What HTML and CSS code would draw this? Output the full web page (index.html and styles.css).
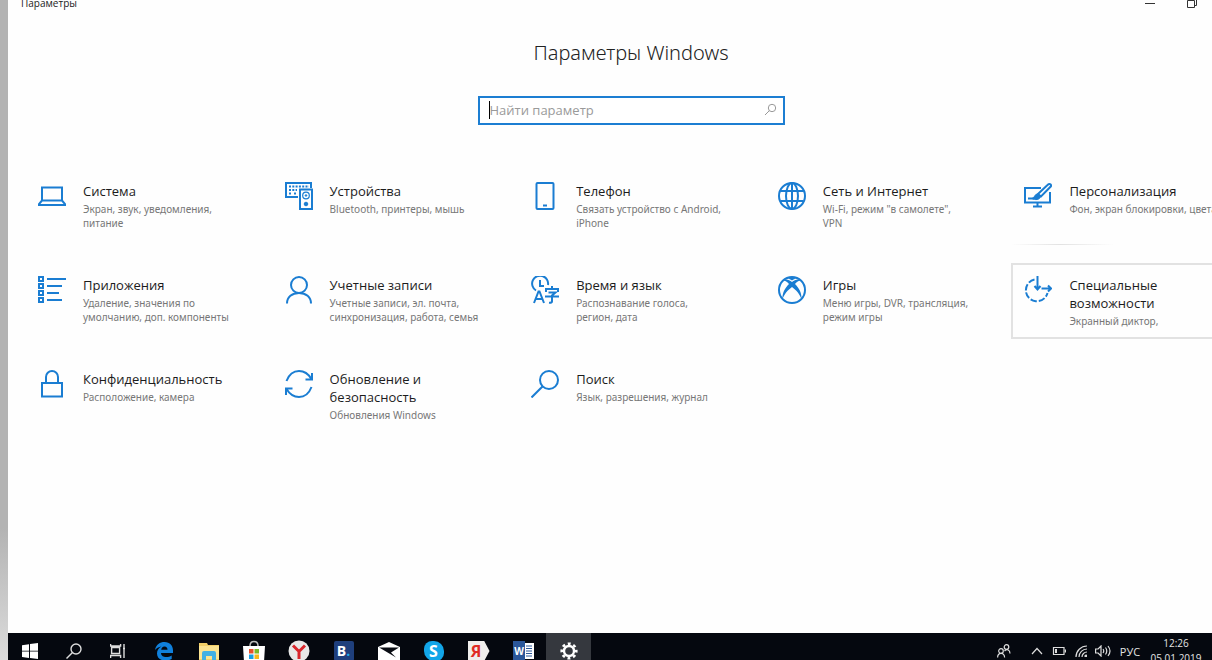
FILE: index.html
```html
<!DOCTYPE html>
<html lang="ru">
<head>
  <meta charset="UTF-8" />
  <meta name="viewport" content="width=device-width, initial-scale=1.0"/>
  <title>Параметры</title>
  <link rel="stylesheet" href="styles.css">
</head>
<body>

<div class="desktop">
  <!-- Main window -->
  <div class="window">
    <header class="titlebar">
      <span>Параметры</span>
      <div class="window-buttons">
        <button type="button" aria-label="Свернуть">
          <svg width="10" height="10" viewBox="0 0 10 10"><path d="M0 5.500h10"/></svg>
        </button>
        <button type="button" aria-label="Развернуть">
          <svg width="10" height="10" viewBox="0 0 10 10"><path d="M.5 2.500h7v7h-7zM2.500 .5h7v7h-2"/></svg>
        </button>
      </div>
    </header>

    <main class="settings">
      <h1>Параметры Windows</h1>

      <form class="search">
        <span class="caret"></span>
        <input type="text" placeholder="Найти параметр" aria-label="Найти параметр">
        <button type="button" aria-label="Найти">
          <svg width="13" height="13" viewBox="0 0 13 13"><circle cx="8" cy="5" r="3.700"/><path d="M5.300 7.700L1 12"/></svg>
        </button>
      </form>

      <nav class="tiles">
        <a class="tile" href="#">
          <svg class="icon" viewBox="0 0 28 28"><path d="M4 5.500h20v13H4zM4 18.500L1 22v1h26v-1l-3-3.500"/></svg>
          <div class="text"><h2>Система</h2><p>Экран, звук, уведомления, питание</p></div>
        </a>

        <a class="tile" href="#">
          <svg class="icon" viewBox="0 0 28 28">
            <path d="M13 15H1V1h25v5"/>
            <path d="M4 4.500h20M4 8h8M4 11.500h3M9 11.500h3" stroke-dasharray="2 1.300"/>
            <path d="M15 7.500h12V27H15z"/><circle cx="21" cy="13.500" r="3.300" class="thin"/><circle cx="21" cy="13.500" r=".8" class="solid"/><circle cx="21" cy="22" r="1.800" class="solid"/>
          </svg>
          <div class="text"><h2>Устройства</h2><p>Bluetooth, принтеры, мышь</p></div>
        </a>

        <a class="tile" href="#">
          <svg class="icon" viewBox="0 0 28 28"><rect x="5.500" y="1" width="17" height="26" rx="1"/><path d="M12 23.500h4"/></svg>
          <div class="text"><h2>Телефон</h2><p>Связать устройство с Android, iPhone</p></div>
        </a>

        <a class="tile" href="#">
          <svg class="icon" viewBox="0 0 28 28"><circle cx="14" cy="14" r="13"/><ellipse cx="14" cy="14" rx="6" ry="13"/><path d="M14 1v26M2.500 9h23M2.500 19h23"/></svg>
          <div class="text"><h2>Сеть и Интернет</h2><p>Wi-Fi, режим "в самолете", VPN</p></div>
        </a>

        <a class="tile reveal" href="#">
          <svg class="icon" viewBox="0 0 28 28">
            <path d="M17 6H1v14.500h25V10M13.500 20.500V24M9 24.500h9M4 16.500h6"/>
            <path d="M25.500 2c1.800 0 2 1.600 1 2.800L17 14.500l-3-2.500L23.500 3c.6-.6 1.200-1 2-1z"/>
            <path d="M13.500 12c-3 0-2.500 3.500-5.500 4.500 3 1.800 8 1.500 8.500-2z" class="solid"/>
          </svg>
          <div class="text"><h2>Персонализация</h2><p class="nowrap">Фон, экран блокировки, цвета</p></div>
        </a>

        <a class="tile" href="#">
          <svg class="icon" viewBox="0 0 28 28">
            <path d="M1 1h4v4H1zM1 8h4v4H1zM1 15h4v4H1zM1 22h4v4H1z"/>
            <path d="M9 3h19M9 10h15M9 17h12M9 24h15"/>
          </svg>
          <div class="text"><h2>Приложения</h2><p>Удаление, значения по умолчанию, доп. компоненты</p></div>
        </a>

        <a class="tile" href="#">
          <svg class="icon" viewBox="0 0 28 28"><circle cx="14" cy="9" r="8"/><path d="M2 27.500C2 21 7 17 14 17s12 4 12 10.500"/></svg>
          <div class="text"><h2>Учетные записи</h2><p>Учетные записи, эл. почта, синхронизация, работа, семья</p></div>
        </a>

        <a class="tile" href="#">
          <svg class="icon" viewBox="0 0 28 28">
            <path d="M5 14.500A8 8 0 1 1 17 9M9 4v6h4"/>
            <path d="M3 27l4.500-11.500h1L13 27M4.500 23h7"/>
            <path d="M21 10v3M15 16v-3h12v3M17.500 16.500h7L21 19.500v6q0 1.500-3 1.200M14 20.500h14"/>
          </svg>
          <div class="text"><h2>Время и язык</h2><p>Распознавание голоса, регион, дата</p></div>
        </a>

        <a class="tile" href="#">
          <svg class="icon" viewBox="0 0 28 28">
            <circle cx="14" cy="14" r="13"/>
            <path class="fill" d="M5 4.500C8 2.500 11 3.500 14 6c3-2.500 6-3.500 9-1.500-2-.2-4 1-6 3.500 4 4 7 9 6.500 15.500C22 18 18 14 14 11c-4 3-8 7-9.500 12.500C4 17 7 12 11 8 9 5.500 7 4.300 5 4.500zM8 3c2-1.500 10-1.500 12 0-2.500-.5-4 .3-6 1.500C12 3.300 10.500 2.500 8 3z"/>
          </svg>
          <div class="text"><h2>Игры</h2><p>Меню игры, DVR, трансляция, режим игры</p></div>
        </a>

        <a class="tile hovered" href="#">
          <svg class="icon" viewBox="0 0 28 28">
            <path d="M10.500 3.500A11 11 0 1 0 23.500 17" stroke-dasharray="6.500 2"/>
            <path d="M13.500 0v13M10.500 10l3 3.500 3-3.500M17.500 12.500H27M24 9.500l3 3-3 3"/>
          </svg>
          <div class="text"><h2>Специальные возможности</h2><p>Экранный диктор,</p></div>
        </a>

        <a class="tile" href="#">
          <svg class="icon" viewBox="0 0 28 28"><path d="M4 13h20v13.500H4zM8 13V7a6 6 0 0 1 12 0v6"/></svg>
          <div class="text"><h2>Конфиденциальность</h2><p>Расположение, камера</p></div>
        </a>

        <a class="tile" href="#">
          <svg class="icon" viewBox="0 0 28 28"><path d="M1.500 11C4 4.500 9 1 14 1c5.500 0 9.500 3 12.500 8M27 3v6.500h-6.500M26.500 17C24 23.500 19 27 14 27c-5.500 0-9.500-3-12.500-8M1 25v-6.500h6.500"/></svg>
          <div class="text"><h2>Обновление и безопасность</h2><p>Обновления Windows</p></div>
        </a>

        <a class="tile" href="#">
          <svg class="icon" viewBox="0 0 28 28"><circle cx="18" cy="10" r="9"/><path d="M11.500 16.500L.5 27.500"/></svg>
          <div class="text"><h2>Поиск</h2><p>Язык, разрешения, журнал</p></div>
        </a>
      </nav>
    </main>
  </div>

  <!-- Taskbar -->
  <footer class="taskbar">
    <div class="system">
      <button type="button" aria-label="Пуск">
        <svg width="16" height="16" viewBox="0 0 16 16" fill="#fff"><path d="M0 2.300l7-1v6.400H0zM8 1.100L16 0v7.700H8zM0 8.500h7v6.400l-7-1zM8 8.500h8V16l-8-1.100z"/></svg>
      </button>
      <button type="button" aria-label="Поиск">
        <svg width="16" height="16" viewBox="0 0 16 16" fill="none" stroke="#ddd" stroke-width="1.400"><circle cx="10" cy="6" r="5"/><path d="M6.500 9.500L.5 15.500"/></svg>
      </button>
      <button type="button" aria-label="Представление задач">
        <svg width="16" height="16" viewBox="0 0 16 16" fill="none" stroke="#ddd" stroke-width="1.400"><path d="M.6 1v2h10V1M1.600 4.500h8v6h-8zM.6 15v-2.500h10V15M14 1v14M13 5.500h2"/></svg>
      </button>
    </div>
    <div class="apps">
      <button type="button" aria-label="Edge">
        <svg width="20" height="20" viewBox="0 0 20 20" fill="#1080dc"><path d="M1 9C2 3.500 6 1 10.500 1 16 1 19 5 19 9.500V12H7c.2 3 2.500 4 5 4 2.200 0 4-.6 5.700-1.600V18c-1.700 1-4 1.500-6.400 1.500C6.500 19.500 3 17 3 12.500 3 9.500 4.500 7 7.500 5.500 4.500 6 2.500 7 1 9zm6.200-.2h6.300c0-2-1-3.300-3-3.300S7.500 6.800 7.200 8.800z"/></svg>
      </button>
      <button type="button" aria-label="Проводник">
        <svg width="20" height="20" viewBox="0 0 20 20"><path d="M0 2h8l1 2h11v15H0z" fill="#f3cf68"/><path d="M0 5h20v13H0z" fill="#fce391"/><path d="M3 20v-8q0-2 2-2h10q2 0 2 2v8h-4v-5H7v5z" fill="#42b0e4"/></svg>
      </button>
      <button type="button" aria-label="Магазин">
        <svg width="22" height="22" viewBox="0 0 22 22"><path d="M7 6c0-6 8-6 8 0" fill="none" stroke="#bbb" stroke-width="1.500"/><path d="M0 6h22l-1 16H1z" fill="#fff"/><path d="M6 9h4.500v4.500H6z" fill="#e8502c"/><path d="M11.500 9H16v4.500h-4.500z" fill="#7cb928"/><path d="M6 14.500h4.500V19H6z" fill="#18a0e4"/><path d="M11.500 14.500H16V19h-4.500z" fill="#f8b81c"/></svg>
      </button>
      <button type="button" aria-label="Яндекс.Браузер">
        <svg width="22" height="22" viewBox="0 0 22 22"><circle cx="11" cy="11" r="10.500" fill="#e8e8e8"/><path d="M5 5.500l6 6 6-6M11 11v8" fill="none" stroke="#d8262c" stroke-width="3"/></svg>
      </button>
      <button type="button" aria-label="Booking"><span class="booking">B<i>.</i></span></button>
      <button type="button" aria-label="Почта">
        <svg width="22" height="20" viewBox="0 0 22 20"><path d="M0 6l11-5 11 5v13H0z" fill="#fff"/><path d="M1 6.500h20l-8 5 5 5L2 7z" fill="#0a0d14"/></svg>
      </button>
      <button type="button" aria-label="Skype"><span class="skype">S</span></button>
      <button type="button" aria-label="Яндекс"><span class="yandex">Я</span></button>
      <button type="button" aria-label="Word">
        <span class="word"><b>W</b><svg width="9" height="16" viewBox="0 0 9 16"><path d="M0 0h9v16H0z" fill="#fff"/><path d="M1 3h6M1 5.500h6M1 8h6M1 10.500h6M1 13h6" stroke="#2b579a"/></svg></span>
      </button>
      <button type="button" class="active" aria-label="Параметры">
        <svg width="18" height="18" viewBox="0 0 18 18" fill="none" stroke="#fff"><circle cx="9" cy="9" r="5" stroke-width="2.400"/><circle cx="9" cy="9" r="7.300" stroke-width="2.600" stroke-dasharray="2.900 2.830" stroke-dashoffset="1.450"/></svg>
      </button>
    </div>
    <div class="tray">
      <button type="button" class="people" aria-label="Люди">
        <svg width="14" height="14" viewBox="0 0 14 14"><circle cx="4" cy="7" r="2.300"/><path d="M.6 13.500c0-5.500 7-5.500 7 0"/><circle cx="9.500" cy="3" r="2.300"/><path d="M7.500 7c2.500-2.500 5.500-1 5.500 2.500"/></svg>
      </button>
      <button type="button" aria-label="Скрытые значки">
        <svg width="12" height="12" viewBox="0 0 12 12"><path d="M1 9l5-5.500L11 9"/></svg>
      </button>
      <button type="button" aria-label="Батарея">
        <svg width="14" height="12" viewBox="0 0 14 12"><path d="M1.500 2.500h10.500v7H1.500zM13.500 4.500v3"/><path d="M3 4h2v4H3z" fill="#ddd" stroke="none"/></svg>
      </button>
      <button type="button" aria-label="Wi-Fi">
        <svg width="12" height="12" viewBox="0 0 12 12"><path d="M1 12A11 11 0 0 1 12 1M4 12a8 8 0 0 1 8-8M7 12a5 5 0 0 1 5-5"/><circle cx="11" cy="11" r="1" fill="#ddd"/></svg>
      </button>
      <button type="button" aria-label="Громкость">
        <svg width="16" height="12" viewBox="0 0 16 12"><path d="M.6 4h2.500L6 1v10L3.100 8H.6zM8 4q1.500 2 0 4M10.500 2.500q2.500 3.500 0 7M13 1q4 5 0 10"/></svg>
      </button>
      <button type="button" class="lang">РУС</button>
      <button type="button" class="clock"><span>12:26</span><span>05.01.2019</span></button>
    </div>
  </footer>
</div>

</body>
</html>
```
FILE: styles.css
```css
* {
  box-sizing: border-box;
}

body {
  margin: 0;
  font-family: 'Open Sans', 'Noto Sans', sans-serif;
  color: #1c1c1c;
  background: #fefefe;
  overflow: hidden;
}

button {
  padding: 0;
  border: none;
  background: none;
  color: inherit;
  font-family: inherit;
}

.desktop {
  display: flex;
  flex-direction: column;
  height: 100vh;
  padding-left: 8px;
  overflow: hidden;
  background: linear-gradient(#b3b3b3 0%, #b3b3b3 80%, #dcdcdc 100%);
}

.window {
  flex: 1;
  min-height: 0;
  background: #fefefe;
}

.titlebar {
  display: flex;
  justify-content: space-between;
  align-items: center;
  height: 6px;
  padding: 0 15px 0 13px;
  font-size: 10px;
  line-height: 14px;
}

.window-buttons {
  display: flex;
  gap: 32px;
}

.window-buttons button {
  display: flex;
}

.window-buttons svg {
  fill: none;
  stroke: #333;
}

/* the window runs past the right edge of the screen */
.settings {
  margin-right: -42px;
}

h1 {
  margin: 0;
  padding-top: 33px;
  font-family: 'Noto Sans', 'Open Sans', sans-serif;
  font-size: 20px;
  line-height: 28px;
  font-weight: 300;
  text-align: center;
  color: #222;
}

.search {
  display: flex;
  align-items: center;
  width: 307px;
  height: 29px;
  margin: 29px auto 44px;
  padding: 0 6px 2px 9px;
  border: 2px solid #1c7ed2;
  background: #fff;
}

.search input {
  flex: 1;
  min-width: 0;
  padding: 0;
  border: none;
  outline: none;
  background: none;
  font-family: inherit;
  font-size: 13px;
}

.search input::placeholder {
  color: #9a9a9a;
}

.search button {
  display: flex;
}

.search svg {
  fill: none;
  stroke: #999;
}

.caret {
  width: 1px;
  height: 18px;
  background: #000;
}

.tiles {
  display: grid;
  grid-template-columns: repeat(5, 1fr);
  grid-auto-rows: 76px;
  row-gap: 18px;
  margin-right: -4px;
  padding-left: 17px;
}

.tile {
  display: flex;
  gap: 17px;
  padding: 13px;
  color: inherit;
  text-decoration: none;
}

.tile.hovered {
  padding: 11px;
  border: 2px solid #e2e2e2;
}

.tile.reveal {
  background: linear-gradient(90deg, #fefefe, #e2e2e2 20%, #fefefe 42%) bottom / 100% 1px no-repeat;
}

.icon {
  flex: none;
  width: 28px;
  height: 28px;
  fill: none;
  stroke: #1a7dd2;
  stroke-width: 2;
}

.icon .thin {
  stroke-width: 1.2;
}

.icon .solid {
  fill: #1a7dd2;
  stroke-width: 1;
}

.icon .fill {
  fill: #1a7dd2;
  stroke: none;
}

.text {
  width: 149px;
}

.text h2 {
  margin: 0;
  font-size: 13px;
  line-height: 18px;
  font-weight: 400;
}

.text p {
  margin: 2px 0 0;
  font-family: 'Noto Sans', 'Open Sans', sans-serif;
  font-size: 10px;
  line-height: 14px;
  color: #777;
}

.text .nowrap {
  white-space: nowrap;
}

/* Taskbar */
.taskbar {
  display: flex;
  height: 36px;
  margin-bottom: -9px;
  background: #05080f;
  color: #e4e4e4;
}

.taskbar button {
  display: flex;
  align-items: center;
  justify-content: center;
}

.system,
.apps,
.tray {
  display: flex;
}

.system button {
  width: 44px;
}

.apps {
  margin-left: 1px;
}

.apps button {
  width: 45px;
}

.apps .active {
  background: #35383e;
}

.booking,
.skype,
.yandex {
  width: 20px;
  height: 20px;
  line-height: 20px;
  font-size: 14px;
  font-weight: 700;
  text-align: center;
  color: #fff;
}

.booking {
  border-radius: 2px;
  background: #1f3f7c;
}

.booking i {
  font-style: normal;
  color: #22a7e8;
}

.skype {
  border-radius: 8px 10px;
  background: #12a5e8;
  font-size: 16px;
}

.yandex {
  width: 22px;
  padding-right: 5px;
  background: #f0eeec;
  clip-path: polygon(0 0, 76% 0, 100% 50%, 76% 100%, 0 100%);
  color: #e02c24;
  font-size: 16px;
}

.word {
  display: flex;
  align-items: center;
}

.word b {
  width: 12px;
  height: 20px;
  line-height: 20px;
  background: #2b579a;
  color: #fff;
  font-size: 10px;
  text-align: center;
}

.tray {
  margin-left: auto;
  padding-right: 6px;
}

.tray button {
  width: 22px;
}

.tray svg {
  fill: none;
  stroke: #ddd;
  stroke-width: 1.2;
}

.tray .people {
  width: 44px;
}

.tray .lang {
  width: 32px;
  font-size: 11px;
}

.tray .clock {
  flex-direction: column;
  width: 60px;
  font-size: 10px;
  line-height: 15px;
}
```
